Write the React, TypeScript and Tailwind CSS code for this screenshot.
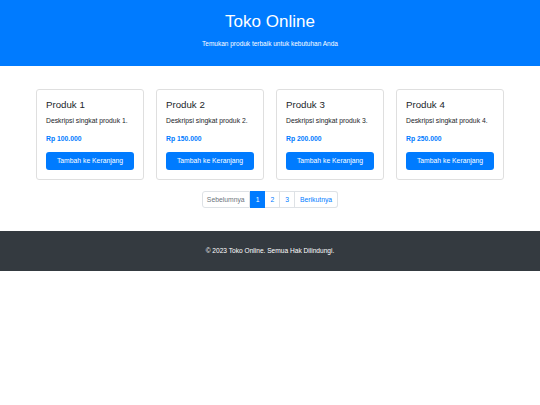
const products = [
  { id: 1, name: 'Produk 1', price: 'Rp 100.000' },
  { id: 2, name: 'Produk 2', price: 'Rp 150.000' },
  { id: 3, name: 'Produk 3', price: 'Rp 200.000' },
  { id: 4, name: 'Produk 4', price: 'Rp 250.000' },
];

function ProductCard({ id, name, price }: { id: number; name: string; price: string }) {
  return (
    <div className="flex flex-col rounded-[3px] border border-[#dfdfdf] bg-white px-[9px] pt-[9px] pb-[9px]">
      <h5 className="text-[9.7px] leading-[11px] text-[#212529]">{name}</h5>
      <p className="mt-[6px] text-[6.8px] leading-[10px] text-[#212529]">Deskripsi singkat produk {id}.</p>
      <p className="mt-[8px] text-[6.8px] font-bold leading-[10px] text-[#007bff]">{price}</p>
      <button className="mt-[8px] h-[18px] w-full rounded-[3px] bg-[#007bff] text-[6.8px] text-white">
        Tambah ke Keranjang
      </button>
    </div>
  );
}

export default function App() {
  return (
    <div className="min-h-[405px] bg-white font-['Liberation_Sans',Arial,sans-serif]">
      <header className="flex h-[66px] flex-col items-center bg-[#007bff] pt-[12px] text-white">
        <h1 className="text-[17px] leading-[20px]">Toko Online</h1>
        <p className="mt-[8px] text-[6.5px] leading-[8px]">Temukan produk terbaik untuk kebutuhan Anda</p>
      </header>

      <main className="px-[36px] pt-[23px] pb-[23px]">
        <div className="grid grid-cols-4 gap-[12px]">
          {products.map((p) => (
            <ProductCard key={p.id} {...p} />
          ))}
        </div>

        <nav className="mt-[11px] flex justify-center">
          <ul className="flex text-[6.8px] leading-[15px]">
            <li className="rounded-l-[3px] border border-[#dee2e6] px-[4px] text-[#6c757d]">Sebelumnya</li>
            <li className="border border-[#007bff] bg-[#007bff] px-[5px] text-white">1</li>
            <li className="border border-l-0 border-[#dee2e6] px-[5px] text-[#007bff]">2</li>
            <li className="border border-l-0 border-[#dee2e6] px-[5px] text-[#007bff]">3</li>
            <li className="rounded-r-[3px] border border-l-0 border-[#dee2e6] px-[5px] text-[#007bff]">Berikutnya</li>
          </ul>
        </nav>
      </main>

      <footer className="flex h-[40px] items-center justify-center bg-[#343a40] text-[6.6px] text-white">
        © 2023 Toko Online. Semua Hak Dilindungi.
      </footer>
    </div>
  );
}
